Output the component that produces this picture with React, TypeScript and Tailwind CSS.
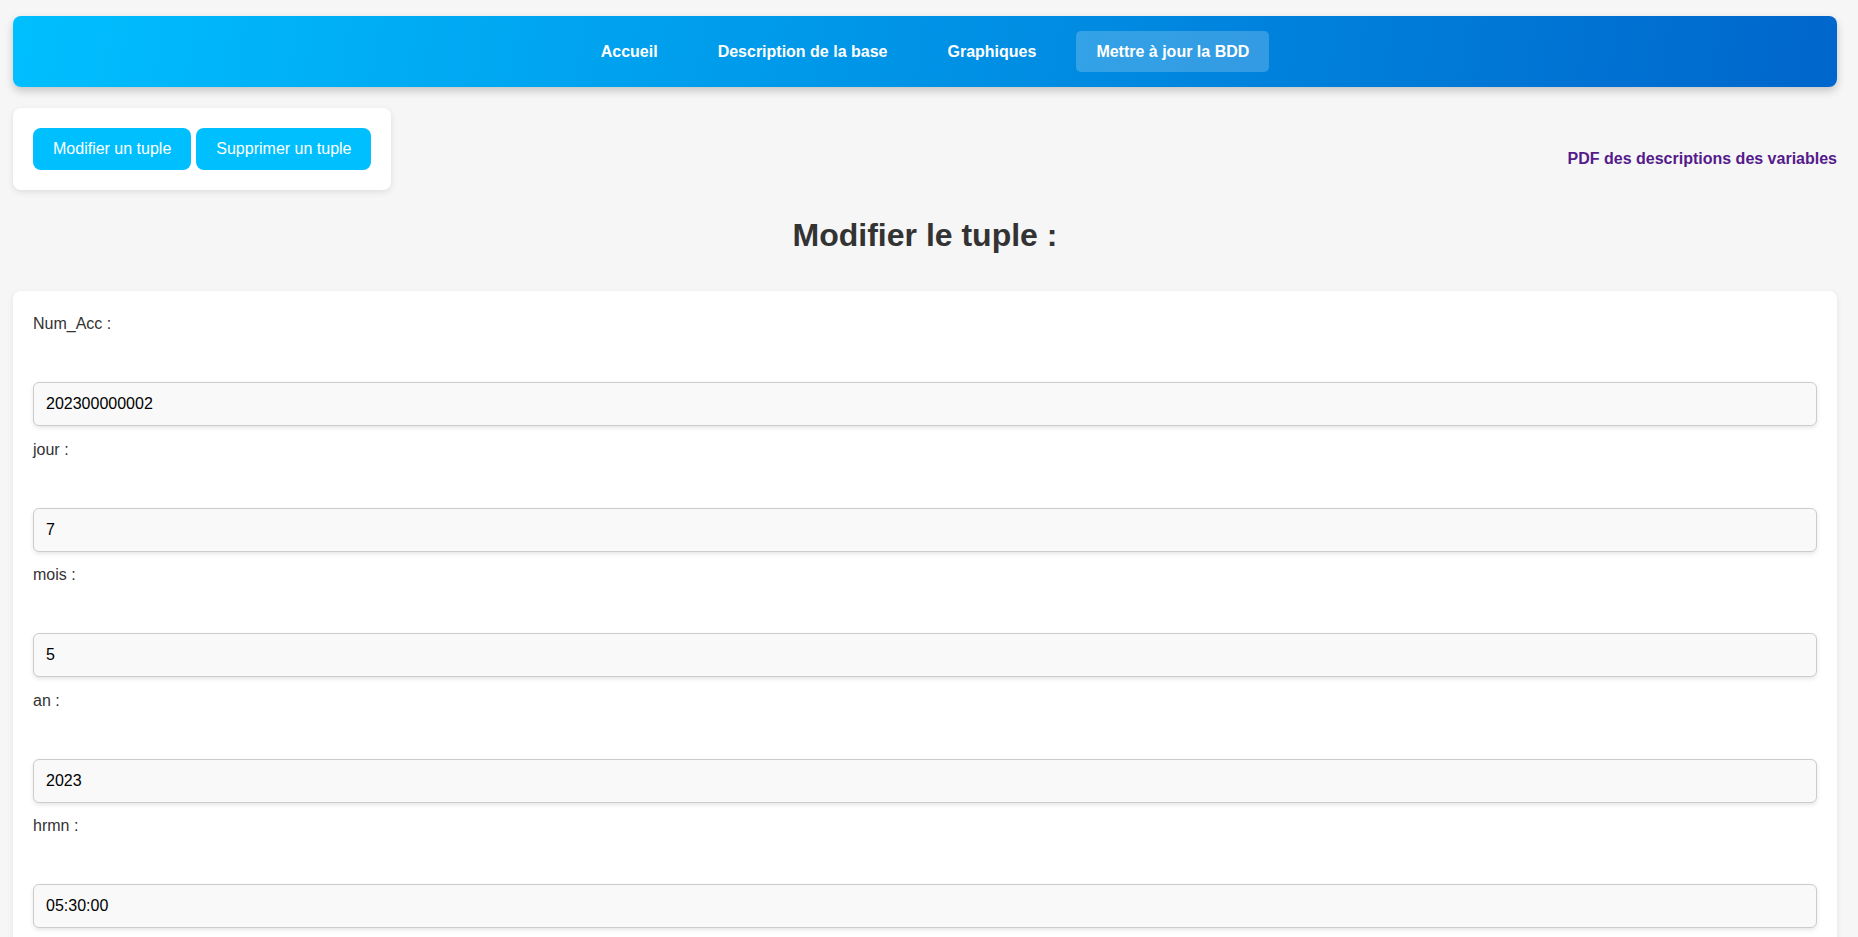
import React from "react";

const fields: [string, string][] = [
  ["Num_Acc", "202300000002"],
  ["jour", "7"],
  ["mois", "5"],
  ["an", "2023"],
  ["hrmn", "05:30:00"],
];

export default function App() {
  return (
    <div className="min-h-screen bg-[#f6f6f6] font-['Liberation_Sans',Arial,sans-serif] pl-[13px] pr-[21px] pt-4 pb-10">
      <nav className="h-[71px] rounded-lg bg-[linear-gradient(100deg,#00bfff,#0066cc)] shadow-[0_4px_8px_rgba(0,0,0,0.2)] flex items-center justify-center">
        <a className="mx-2.5 px-5 py-[11px] leading-[19px] rounded-[5px] text-white font-bold text-base">Accueil</a>
        <a className="mx-2.5 px-5 py-[11px] leading-[19px] rounded-[5px] text-white font-bold text-base">Description de la base</a>
        <a className="mx-2.5 px-5 py-[11px] leading-[19px] rounded-[5px] text-white font-bold text-base">Graphiques</a>
        <a className="mx-2.5 px-5 py-[11px] leading-[19px] rounded-[5px] text-white font-bold text-base bg-white/20">Mettre à jour la BDD</a>
      </nav>

      <div className="mt-[21px] flex items-start justify-between">
        <div className="bg-white rounded-lg p-5 shadow-[0_2px_6px_rgba(0,0,0,0.1)] flex gap-[5px]">
          <button className="bg-[#00bfff] text-white text-base leading-[18px] px-5 py-3 rounded-lg">Modifier un tuple</button>
          <button className="bg-[#00bfff] text-white text-base leading-[18px] px-5 py-3 rounded-lg">Supprimer un tuple</button>
        </div>
        <a className="mt-[42px] text-[#551a8b] font-bold text-base leading-[18px]">PDF des descriptions des variables</a>
      </div>

      <h1 className="mt-[27px] text-center text-[32px] leading-[37px] font-bold text-[#333]">Modifier le tuple :</h1>

      <div className="mt-[37px] bg-white rounded-lg px-5 pt-6 pb-5 shadow-[0_2px_6px_rgba(0,0,0,0.08)]">
        {fields.map(([label, value]) => (
          <div key={label}>
            <label className="block text-base leading-[18px] text-[#333] mb-[49px]">{label} :</label>
            <input
              readOnly
              value={value}
              className="block w-full h-[44px] px-3 mb-[14.5px] border border-[#ccc] rounded-md bg-[#f9f9f9] text-base text-black shadow-[0_2px_4px_rgba(0,0,0,0.1)] outline-none"
            />
          </div>
        ))}
      </div>
    </div>
  );
}
